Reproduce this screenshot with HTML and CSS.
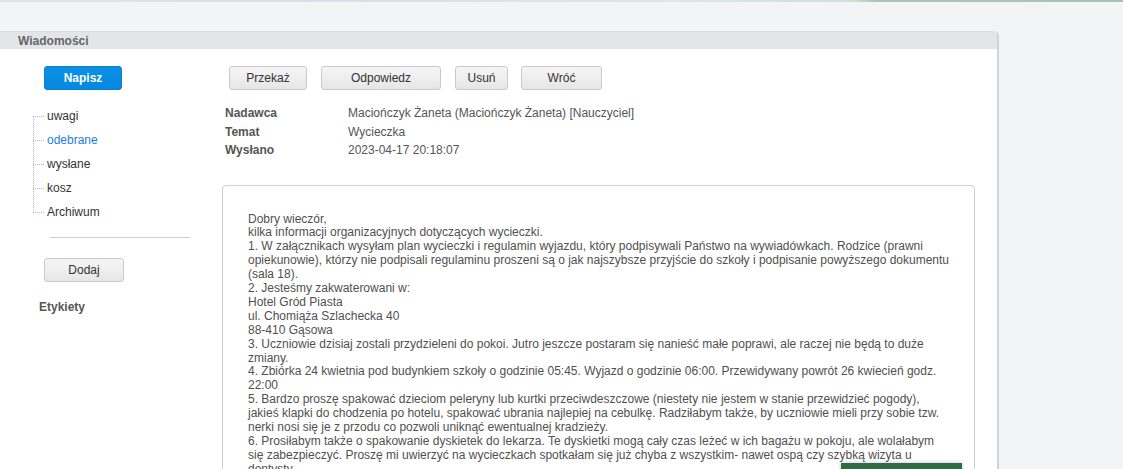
FILE: index.html
```html
<!DOCTYPE html>
<html lang="pl">
<head>
<meta charset="utf-8">
<title>Wiadomości</title>
<link rel="stylesheet" href="styles.css">
</head>
<body>
<div class="topline"></div>
<div class="page">
  <div class="panel">
    <div class="panel-header">Wiadomości</div>
    <div class="panel-body">
      <aside class="sidebar">
        <button class="btn btn-primary btn-napisz">Napisz</button>
        <ul class="tree">
          <li>uwagi</li>
          <li class="active">odebrane</li>
          <li>wysłane</li>
          <li>kosz</li>
          <li>Archiwum</li>
        </ul>
        <div class="sep"></div>
        <button class="btn btn-dodaj">Dodaj</button>
        <div class="labels-title">Etykiety</div>
      </aside>
      <main class="main">
        <div class="toolbar">
          <button class="btn w-przekaz">Przekaż</button>
          <button class="btn w-odpowiedz">Odpowiedz</button>
          <button class="btn w-usun">Usuń</button>
          <button class="btn w-wroc">Wróć</button>
        </div>
        <div class="meta">
          <div class="meta-label">Nadawca</div><div class="meta-value">Maciończyk Żaneta (Maciończyk Żaneta) [Nauczyciel]</div>
          <div class="meta-label">Temat</div><div class="meta-value">Wycieczka</div>
          <div class="meta-label">Wysłano</div><div class="meta-value">2023-04-17 20:18:07</div>
        </div>
        <div class="message">
          <p>Dobry wieczór,<br>
kilka informacji organizacyjnych dotyczących wycieczki.<br>
1. W załącznikach wysyłam plan wycieczki i regulamin wyjazdu, który podpisywali Państwo na wywiadówkach. Rodzice (prawni<br>
opiekunowie), którzy nie podpisali regulaminu proszeni są o jak najszybsze przyjście do szkoły i podpisanie powyższego dokumentu<br>
(sala 18).<br>
2. Jesteśmy zakwaterowani w:<br>
Hotel Gród Piasta<br>
ul. Chomiąża Szlachecka 40<br>
88-410 Gąsowa<br>
3. Uczniowie dzisiaj zostali przydzieleni do pokoi. Jutro jeszcze postaram się nanieść małe poprawi, ale raczej nie będą to duże<br>
zmiany.<br>
4. Zbiórka 24 kwietnia pod budynkiem szkoły o godzinie 05:45. Wyjazd o godzinie 06:00. Przewidywany powrót 26 kwiecień godz.<br>
22:00<br>
5. Bardzo proszę spakować dzieciom peleryny lub kurtki przeciwdeszczowe (niestety nie jestem w stanie przewidzieć pogody),<br>
jakieś klapki do chodzenia po hotelu, spakować ubrania najlepiej na cebulkę. Radziłabym także, by uczniowie mieli przy sobie tzw.<br>
nerki nosi się je z przodu co pozwoli uniknąć ewentualnej kradzieży.<br>
6. Prosiłabym także o spakowanie dyskietek do lekarza. Te dyskietki mogą cały czas leżeć w ich bagażu w pokoju, ale wolałabym<br>
się zabezpieczyć. Proszę mi uwierzyć na wycieczkach spotkałam się już chyba z wszystkim- nawet ospą czy szybką wizyta u<br>
dentysty.</p>
        </div>
      </main>
    </div>
  </div>
</div>
<div class="widget"></div>
</body>
</html>
```
FILE: styles.css
```css
html, body {
  margin: 0;
  padding: 0;
}
body {
  background: #f3f4f6;
  font-family: "Liberation Sans", Arial, sans-serif;
  font-size: 12px;
  color: #555;
  overflow: hidden;
  height: 469px;
}
.topline {
  height: 2px;
  background: linear-gradient(to right, #dfe3e6 0%, #dcdde6 30%, #dfe6e6 60%, #cfe0d6 76%, #a9c7b3 78%, #a6c5b0 100%);
}
.page {
  padding-top: 29px;
}
.panel {
  width: 997px;
  background: #fff;
  border-right: 2px solid #d3d3d3;
  border-top-right-radius: 5px;
  height: 460px;
}
.panel-header {
  height: 18px;
  line-height: 19px;
  background: #e4e5e7;
  border-top: 1px solid #dcdcdc;
  box-sizing: border-box;
  padding-left: 18px;
  font-weight: bold;
  font-size: 12px;
  color: #666;
  border-top-right-radius: 5px;
}
.panel-body {
  display: flex;
}
.sidebar {
  width: 222px;
  flex: none;
  display: flex;
  flex-direction: column;
  align-items: flex-start;
}
.btn {
  font-family: "Liberation Sans", Arial, sans-serif;
  font-size: 12px;
  color: #333;
  height: 24px;
  padding: 0;
  border: 1px solid #c9c9c9;
  border-radius: 3px;
  background: linear-gradient(to bottom, #f6f6f6 0%, #e6e6e6 100%);
  cursor: pointer;
}
.btn-primary {
  color: #fff;
  font-weight: bold;
  border-color: #0a7fd2;
  background: linear-gradient(to bottom, #0b90e6 0%, #0588de 100%);
}
.btn-napisz {
  margin: 17px 0 0 44px;
  width: 78px;
}
.tree {
  list-style: none;
  margin: 14px 0 0 33px;
  padding: 0;
  position: relative;
}
.tree::before {
  content: "";
  position: absolute;
  left: 0;
  top: 12px;
  bottom: 12px;
  border-left: 1px dotted #b8b8b8;
}
.tree li {
  position: relative;
  line-height: 24px;
  padding-left: 14px;
  color: #333;
}
.tree li::before {
  content: "";
  position: absolute;
  left: 0;
  top: 12px;
  width: 11px;
  border-top: 1px dotted #b8b8b8;
}
.tree li.active {
  color: #1a7fe0;
}
.sep {
  margin: 13px 0 0 50px;
  width: 140px;
  height: 1px;
  background: #cfcfcf;
}
.btn-dodaj {
  margin: 20px 0 0 44px;
  width: 80px;
}
.labels-title {
  margin: 17px 0 0 39px;
  font-weight: bold;
  color: #555;
  line-height: 16px;
}
.main {
  flex: none;
  width: 753px;
  padding-top: 17px;
}
.toolbar {
  display: flex;
  gap: 14px;
  padding-left: 7px;
}
.w-przekaz { width: 78px; }
.w-odpowiedz { width: 120px; }
.w-usun { width: 53px; }
.w-wroc { width: 81px; margin-left: -1px; }
.meta {
  display: grid;
  grid-template-columns: 123px auto;
  margin: 14px 0 0 3px;
  line-height: 18.5px;
}
.meta-label {
  font-weight: bold;
  color: #555;
}
.meta-value {
  color: #555;
}
.message {
  margin-top: 25px;
  border: 1px solid #cfcfcf;
  border-radius: 4px;
  padding: 27px 10px 25px 25px;
  color: #505050;
}
.message p {
  margin: 0;
  white-space: nowrap;
  line-height: 13.9px;
}
.widget {
  position: fixed;
  left: 841px;
  top: 463px;
  width: 121px;
  height: 40px;
  background: #2f6b46;
  box-shadow: 0 0 4px rgba(0,0,0,0.25);
}
```
